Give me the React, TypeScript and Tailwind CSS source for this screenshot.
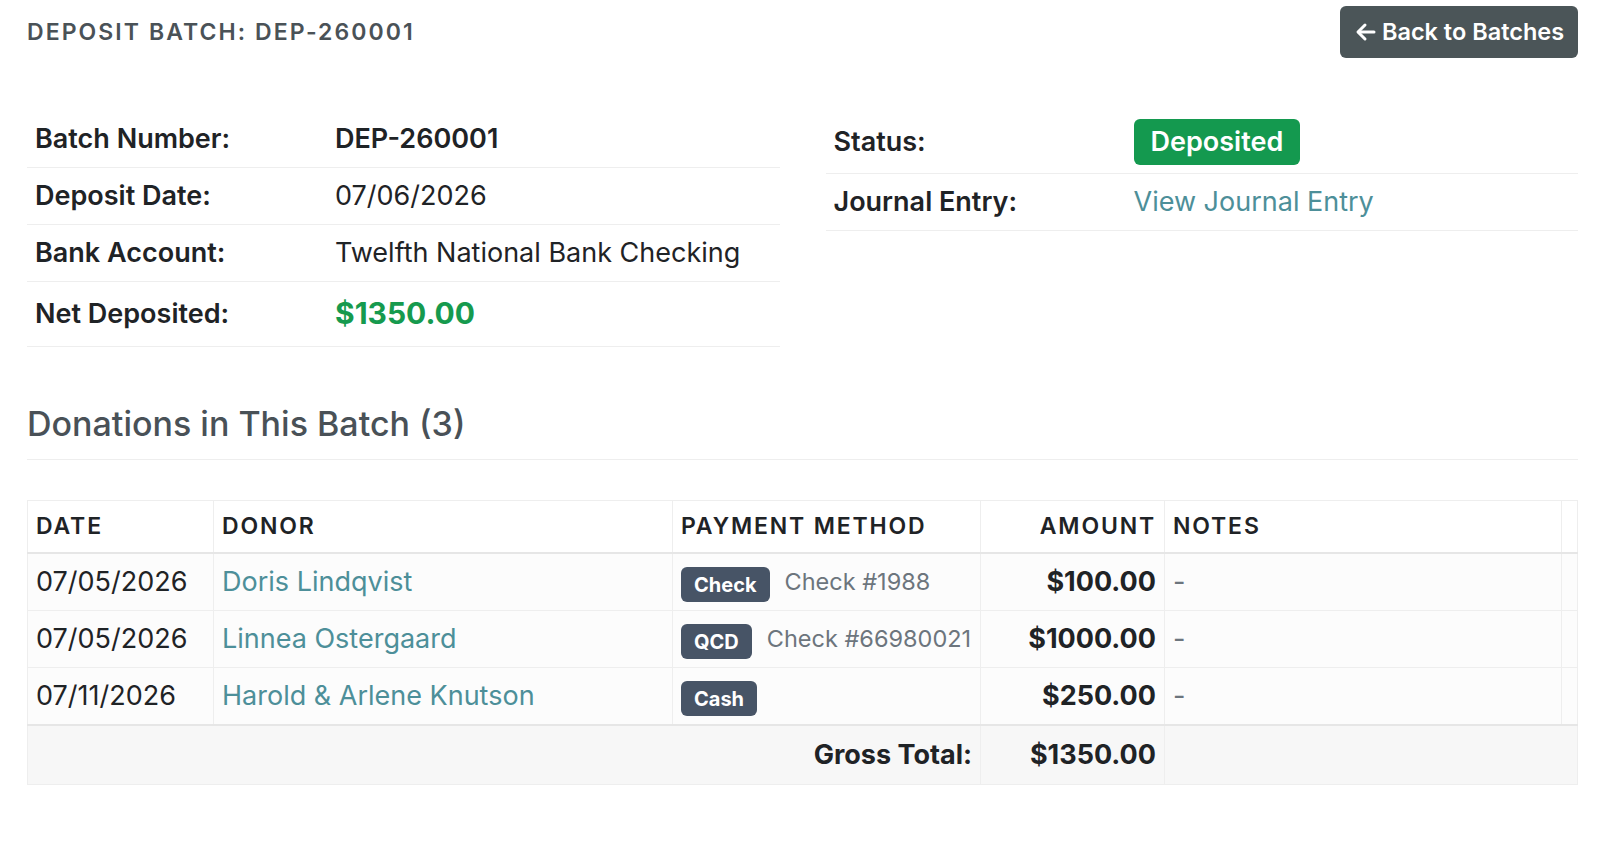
import React from "react";

const font = { fontFamily: "Inter, 'Noto Sans', sans-serif" };

function ArrowLeft() {
  return (
    <svg width="24" height="24" viewBox="0 0 24 24" fill="none" stroke="currentColor" strokeWidth="3" strokeLinecap="round" strokeLinejoin="round">
      <path d="M20 12H5" />
      <path d="M11 5l-7 7 7 7" />
    </svg>
  );
}

type Row = { label: string; value: React.ReactNode; tall?: boolean };

function InfoTable({ rows }: { rows: Row[] }) {
  return (
    <table className="w-full table-fixed border-collapse self-start">
      <tbody>
        {rows.map((r, i) => (
          <tr key={i} className="border-b border-[#eeeeee]">
            <td className={`w-[300px] px-2 py-[8px] align-middle text-[27px] font-semibold text-[#1f2326] ${r.tall ? "leading-[46px]" : "leading-[40px]"}`}>{r.label}</td>
            <td className={`px-2 py-[8px] align-middle text-[27px] text-[#1f2326] ${r.tall ? "leading-[46px]" : "leading-[40px]"}`}>{r.value}</td>
          </tr>
        ))}
      </tbody>
    </table>
  );
}

const donations = [
  { date: "07/05/2026", donor: "Doris Lindqvist", method: "Check", ref: "Check #1988", amount: "$100.00" },
  { date: "07/05/2026", donor: "Linnea Ostergaard", method: "QCD", ref: "Check #66980021", amount: "$1000.00" },
  { date: "07/11/2026", donor: "Harold & Arlene Knutson", method: "Cash", ref: "", amount: "$250.00" },
];

export default function App() {
  return (
    <div className="min-h-screen bg-white pl-[27px] pr-[22px] pt-[6px]" style={font}>
      <div className="flex items-start justify-between">
        <h1 className="mt-[10px] text-[23px] font-semibold uppercase leading-[32px] tracking-[0.09em] text-[#4a5257]">Deposit Batch: DEP-260001</h1>
        <button className="flex h-[52px] w-[238px] items-center justify-center gap-[4px] rounded-[6px] bg-[#4b5558] text-[23.5px] font-semibold text-white">
          <ArrowLeft />
          <span>Back to Batches</span>
        </button>
      </div>

      <div className="mt-[53px] grid grid-cols-2 items-start gap-[46px]">
        <InfoTable
          rows={[
            { label: "Batch Number:", value: <span className="font-semibold">DEP-260001</span> },
            { label: "Deposit Date:", value: "07/06/2026" },
            { label: "Bank Account:", value: "Twelfth National Bank Checking" },
            { label: "Net Deposited:", value: <span className="text-[30px] font-bold text-[#169a4e]">$1350.00</span>, tall: true },
          ]}
        />
        <InfoTable
          rows={[
            {
              label: "Status:",
              value: (
                <span className="inline-flex h-[46px] items-center rounded-[6px] bg-[#14994f] px-[17px] text-[27px] font-semibold text-white">Deposited</span>
              ),
              tall: true,
            },
            { label: "Journal Entry:", value: <a className="text-[#4d8f99]">View Journal Entry</a> },
          ]}
        />
      </div>

      <h2 className="mt-[57px] border-b border-[#eeeeee] pb-[15px] text-[34px] font-medium leading-[40px] text-[#495157]">Donations in This Batch (3)</h2>

      <table className="mt-[40px] w-full table-fixed border-collapse border border-[#eeeeee]">
        <thead>
          <tr className="border-b-2 border-[#e6e6e6] bg-white text-left text-[23px] font-semibold uppercase leading-[32px] tracking-[0.08em] text-[#1f2326]">
            <th className="w-[186px] border-r border-[#eeeeee] px-2 pb-[10px] pt-[9px] font-semibold">Date</th>
            <th className="w-[459px] border-r border-[#eeeeee] px-2 pb-[10px] pt-[9px] font-semibold">Donor</th>
            <th className="w-[308px] border-r border-[#eeeeee] px-2 pb-[10px] pt-[9px] font-semibold">Payment Method</th>
            <th className="w-[184px] border-r border-[#eeeeee] px-2 pb-[10px] pt-[9px] text-right font-semibold">Amount</th>
            <th className="border-r border-[#eeeeee] px-2 pb-[10px] pt-[9px] font-semibold">Notes</th>
            <th className="w-[16px] p-0"></th>
          </tr>
        </thead>
        <tbody>
          {donations.map((d, i) => (
            <tr key={i} className={`bg-[#fcfcfc] text-[27px] leading-[40px] text-[#1f2326] ${i === donations.length - 1 ? "border-b-2 border-[#e6e6e6]" : "border-b border-[#eeeeee]"}`}>
              <td className="border-r border-[#eeeeee] px-2 py-[8px]">{d.date}</td>
              <td className="border-r border-[#eeeeee] px-2 py-[8px] text-[#4d8f99]">{d.donor}</td>
              <td className="border-r border-[#eeeeee] px-2 py-[8px]">
                <div className="flex items-center gap-[15px] whitespace-nowrap">
                  <span className="mt-[5px] inline-flex h-[35px] items-center rounded-[6px] bg-[#475466] px-[13px] text-[20px] font-bold leading-none text-white">{d.method}</span>
                  {d.ref && <span className="text-[23.5px] text-[#6c757d]">{d.ref}</span>}
                </div>
              </td>
              <td className="border-r border-[#eeeeee] px-2 py-[8px] text-right font-bold">{d.amount}</td>
              <td className="border-r border-[#eeeeee] px-2 py-[8px] text-[#6c757d]">-</td>
              <td className="p-0"></td>
            </tr>
          ))}
          <tr className="bg-[#f7f7f7] text-[27px] font-bold leading-[42px] text-[#1f2326]">
            <td colSpan={3} className="border-r border-[#eeeeee] px-2 py-[8px] text-right">Gross Total:</td>
            <td className="border-r border-[#eeeeee] px-2 py-[8px] text-right">$1350.00</td>
            <td colSpan={2} className="px-2 py-[8px]"></td>
          </tr>
        </tbody>
      </table>
    </div>
  );
}
